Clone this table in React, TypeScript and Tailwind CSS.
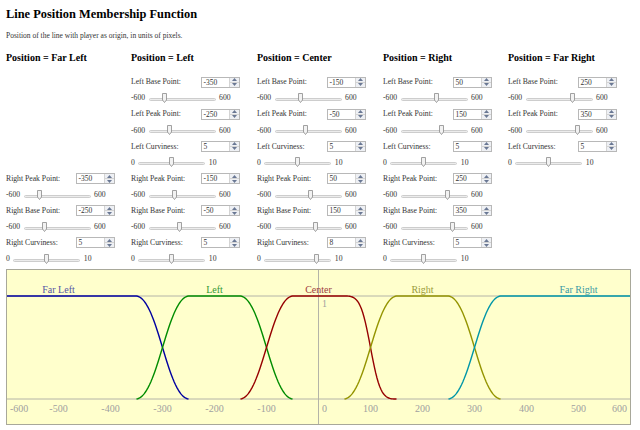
import React from 'react';

interface Side {
  base: number;
  peak: number;
  curv: number;
}

interface Column {
  title: string;
  left?: Side;
  right?: Side;
}

const columns: Column[] = [
  { title: 'Far Left', right: { peak: -350, base: -250, curv: 5 } },
  { title: 'Left', left: { base: -350, peak: -250, curv: 5 }, right: { peak: -150, base: -50, curv: 5 } },
  { title: 'Center', left: { base: -150, peak: -50, curv: 5 }, right: { peak: 50, base: 150, curv: 8 } },
  { title: 'Right', left: { base: 50, peak: 150, curv: 5 }, right: { peak: 250, base: 350, curv: 5 } },
  { title: 'Far Right', left: { base: 250, peak: 350, curv: 5 } },
];

const SpinBox = ({ value }: { value: number }) => (
  <div className="flex h-[11px] w-[39px] border border-[#b8b8b8] bg-white">
    <span className="flex-1 pl-[2px] text-[7.5px] leading-[9px] text-[#333]">{value}</span>
    <div className="flex w-[10px] flex-col border-l border-[#d4d4d4] bg-[#eef0f4]">
      <div className="flex flex-1 items-center justify-center border-b border-[#d4d4d4]">
        <svg width="5" height="3" viewBox="0 0 5 3">
          <path d="M0 3 L2.5 0 L5 3Z" fill="#6a7894" />
        </svg>
      </div>
      <div className="flex flex-1 items-center justify-center">
        <svg width="5" height="3" viewBox="0 0 5 3">
          <path d="M0 0 L2.5 3 L5 0Z" fill="#6a7894" />
        </svg>
      </div>
    </div>
  </div>
);

const Slider = ({ value, min, max }: { value: number; min: number; max: number }) => {
  const f = (value - min) / (max - min);
  return (
    <div className="flex h-[16.2px] items-center text-[7.7px] text-[#333]">
      <span>{min}</span>
      <div className="relative mx-[3.5px] h-[10px] w-[67px]">
        <div className="absolute left-0 right-0 top-[5px] h-[3px] rounded-sm border border-[#cdcdcd] bg-[#ececec]" />
        <svg className="absolute top-0" style={{ left: f * 62 }} width="5" height="10" viewBox="0 0 5 10">
          <path d="M0.5 0.5 H4.5 V7 L2.5 9.5 L0.5 7 Z" fill="#f2f2f2" stroke="#8a8a8a" strokeWidth="0.8" />
        </svg>
      </div>
      <span>{max}</span>
    </div>
  );
};

const Field = ({ label, value, min, max }: { label: string; value: number; min: number; max: number }) => (
  <div>
    <div className="flex h-[16px] items-center">
      <span className="w-[69.5px] text-[7.7px] text-[#333]">{label}</span>
      <SpinBox value={value} />
    </div>
    <Slider value={value} min={min} max={max} />
  </div>
);

const Blank = () => <div className="h-[32.2px]" />;

const X = (v: number) => 311.5 + v * 0.52;
const Y = (m: number) => 129 - m * 103;

// s-shaped ramp between two points, steeper for higher curviness
function curve(v0: number, v1: number, rising: boolean, c: number) {
  const k = c / 3;
  const pts: string[] = [];
  for (let i = 0; i <= 40; i++) {
    const t = i / 40;
    const a = Math.pow(t, k);
    const b = Math.pow(1 - t, k);
    const s = a / (a + b);
    const m = rising ? s : 1 - s;
    const v = v0 + (v1 - v0) * t;
    pts.push(`${X(v).toFixed(2)},${Y(m).toFixed(2)}`);
  }
  return pts.join(' L');
}

const shapes = [
  { name: 'Far Left', color: '#0000a0', label: '#5555a5', mid: -500, d: `M${X(-600)},${Y(1)} L${curve(-350, -250, false, 5)}` },
  { name: 'Left', color: '#008c00', label: '#339933', mid: -200, d: `M${curve(-350, -250, true, 5)} L${curve(-150, -50, false, 5)}` },
  { name: 'Center', color: '#960000', label: '#a03c3c', mid: 0, d: `M${curve(-150, -50, true, 5)} L${curve(50, 150, false, 8)}` },
  { name: 'Right', color: '#949400', label: '#9a9a3a', mid: 200, d: `M${curve(50, 150, true, 5)} L${curve(250, 350, false, 5)}` },
  { name: 'Far Right', color: '#0096a8', label: '#3a9aa5', mid: 500, d: `M${curve(250, 350, true, 5)} L${X(600)},${Y(1)}` },
];

const ticks = [-600, -500, -400, -300, -200, -100, 0, 100, 200, 300, 400, 500, 600];

const Chart = () => (
  <div className="mt-[2px] h-[156px] w-[625px] border border-[#a8a89a] bg-[#ffffcc]">
    <svg width="623" height="154" viewBox="0 0 623 154" fontFamily="'Liberation Serif', serif">
      <line x1="0" y1={Y(1)} x2="623" y2={Y(1)} stroke="#b4b4a8" strokeWidth="1" />
      <line x1="0" y1={Y(0)} x2="623" y2={Y(0)} stroke="#b4b4a8" strokeWidth="1" />
      <line x1={X(0)} y1="0" x2={X(0)} y2="154" stroke="#b4b4a8" strokeWidth="1" />
      <text x="315" y="37" fontSize="10" fill="#a0a0a0">1</text>
      {ticks.map((t) => {
        let x = X(t);
        let anchor: 'start' | 'middle' | 'end' = 'middle';
        if (t === -600) {
          x = 3;
          anchor = 'start';
        } else if (t === 600) {
          x = 620;
          anchor = 'end';
        } else if (t === 0) {
          x = 315;
          anchor = 'start';
        }
        return (
          <text key={t} x={x} y="141.5" fontSize="10" fill="#a0a0a0" textAnchor={anchor}>
            {t}
          </text>
        );
      })}
      {shapes.map((s) => (
        <path key={s.name} d={s.d} fill="none" stroke={s.color} strokeWidth="1.4" />
      ))}
      {shapes.map((s) => (
        <text key={s.name} x={X(s.mid)} y="23" fontSize="10" fill={s.label} textAnchor="middle">
          {s.name}
        </text>
      ))}
    </svg>
  </div>
);

export default function App() {
  return (
    <div className="h-[430px] w-[640px] overflow-hidden bg-white pl-[6px] font-['Liberation_Serif',serif] text-[#222]">
      <h1 className="pt-[6px] text-[12.4px] leading-[16px] font-bold text-black">Line Position Membership Function</h1>
      <p className="mt-[9px] text-[7.5px] leading-[10px] text-[#333]">
        Position of the line with player as origin, in units of pixels.
      </p>
      <div className="mt-[11px] grid grid-cols-[125px_126px_126px_125px_1fr]">
        {columns.map((col) => (
          <div key={col.title} className="flex flex-col">
            <h2 className="text-[10px] leading-[12px] font-bold text-black">Position = {col.title}</h2>
            <div className="mt-[10px]">
              {col.left ? (
                <>
                  <Field label="Left Base Point:" value={col.left.base} min={-600} max={600} />
                  <Field label="Left Peak Point:" value={col.left.peak} min={-600} max={600} />
                  <Field label="Left Curviness:" value={col.left.curv} min={0} max={10} />
                </>
              ) : (
                <>
                  <Blank />
                  <Blank />
                  <Blank />
                </>
              )}
              {col.right ? (
                <>
                  <Field label="Right Peak Point:" value={col.right.peak} min={-600} max={600} />
                  <Field label="Right Base Point:" value={col.right.base} min={-600} max={600} />
                  <Field label="Right Curviness:" value={col.right.curv} min={0} max={10} />
                </>
              ) : (
                <>
                  <Blank />
                  <Blank />
                  <Blank />
                </>
              )}
            </div>
          </div>
        ))}
      </div>
      <Chart />
    </div>
  );
}
